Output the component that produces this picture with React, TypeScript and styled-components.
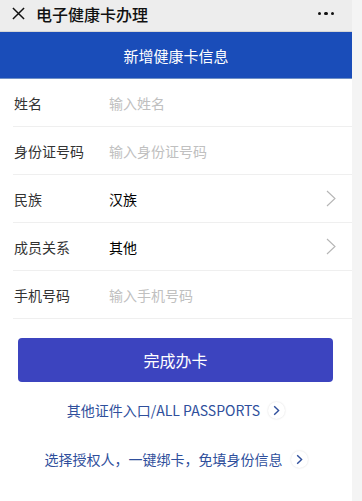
import React from 'react';
import styled, { createGlobalStyle } from 'styled-components';

const GlobalStyle = createGlobalStyle`
  html, body {
    margin: 0;
    padding: 0;
    background: #ffffff;
  }
  body {
    font-family: "Noto Sans CJK SC", "Noto Sans", sans-serif;
    -webkit-font-smoothing: antialiased;
  }
`;

interface Field {
  label: string;
  value?: string;
  placeholder?: string;
  select?: boolean;
}

const fields: Field[] = [
  { label: '姓名', placeholder: '输入姓名' },
  { label: '身份证号码', placeholder: '输入身份证号码' },
  { label: '民族', value: '汉族', select: true },
  { label: '成员关系', value: '其他', select: true },
  { label: '手机号码', placeholder: '输入手机号码' },
];

function Chevron() {
  return (
    <svg width="10" height="17" viewBox="0 0 10 17">
      <path d="M1 1l8 7.5L1 16" fill="none" stroke="#b5b5b5" strokeWidth="1.1" />
    </svg>
  );
}

function CircleArrow() {
  return (
    <Circle>
      <svg width="7" height="11" viewBox="0 0 7 11">
        <path d="M1.2 1.2L5.6 5.5 1.2 9.8" fill="none" stroke="#2f4f9c" strokeWidth="1.4" />
      </svg>
    </Circle>
  );
}

export default function App() {
  return (
    <>
      <GlobalStyle />
      <Page>
        <Main>
          <NavBar>
            <CloseIcon viewBox="0 0 14 14">
              <path d="M1 1l12 12M13 1L1 13" stroke="#111" strokeWidth="1.6" fill="none" />
            </CloseIcon>
            <NavTitle>电子健康卡办理</NavTitle>
            <Dots>
              <span />
              <span />
              <span />
            </Dots>
          </NavBar>
          <Banner>新增健康卡信息</Banner>
          <Form>
            {fields.map((f) => (
              <Row key={f.label}>
                <Label>{f.label}</Label>
                <Value $placeholder={!f.value}>{f.value ?? f.placeholder}</Value>
                {f.select ? <Chevron /> : null}
              </Row>
            ))}
          </Form>
          <Submit>完成办卡</Submit>
          <LinkRow $top={18}>
            其他证件入口/ALL PASSPORTS
            <CircleArrow />
          </LinkRow>
          <LinkRow $top={29}>
            选择授权人，一键绑卡，免填身份信息
            <CircleArrow />
          </LinkRow>
        </Main>
        <SideStrip />
      </Page>
    </>
  );
}

const Page = styled.div`
  display: flex;
  min-height: 501px;
`;

const Main = styled.div`
  width: 352px;
  background: #ffffff;
  display: flex;
  flex-direction: column;
`;

const SideStrip = styled.div`
  flex: 1;
  background: #f4f4f4;
`;

const NavBar = styled.div`
  height: 32px;
  background: #ededed;
  border-bottom: 1px solid #d6d6d6;
  display: flex;
  align-items: center;
  padding: 0 18px 0 12px;
  box-sizing: border-box;
`;

const CloseIcon = styled.svg`
  width: 13px;
  height: 13px;
  margin-right: 11px;
  margin-top: -4px;
`;

const NavTitle = styled.div`
  flex: 1;
  font-size: 16px;
  font-weight: 500;
  color: #111111;
  margin-top: -4px;
`;

const Dots = styled.div`
  display: flex;
  gap: 3px;
  margin-top: -4px;

  span {
    width: 3.5px;
    height: 3.5px;
    border-radius: 50%;
    background: #111111;
  }
`;

const Banner = styled.div`
  height: 46px;
  background: #1a4db9;
  border-bottom: 1px solid #6f90c6;
  color: #ffffff;
  font-size: 15px;
  display: flex;
  align-items: center;
  justify-content: center;
`;

const Form = styled.div`
  display: flex;
  flex-direction: column;
`;

const Row = styled.div`
  height: 48px;
  margin-left: 13px;
  padding-right: 16px;
  border-bottom: 1px solid #efefef;
  box-sizing: border-box;
  display: flex;
  align-items: center;
`;

const Label = styled.div`
  width: 95px;
  padding-left: 1px;
  font-size: 14px;
  color: #333333;
`;

const Value = styled.div<{ $placeholder: boolean }>`
  flex: 1;
  font-size: 14px;
  color: ${(p) => (p.$placeholder ? '#c0c0c0' : '#000000')};
`;

const Submit = styled.button`
  margin: 19px 19px 0 18px;
  height: 44px;
  border: none;
  border-radius: 4px;
  background: #3c44bf;
  color: #ffffff;
  font-family: inherit;
  font-size: 16px;
  cursor: pointer;
`;

const LinkRow = styled.div<{ $top: number }>`
  margin-top: ${(p) => p.$top}px;
  display: flex;
  align-items: center;
  justify-content: center;
  gap: 8px;
  font-size: 14px;
  color: #2f4f9c;
`;

const Circle = styled.span`
  width: 17px;
  height: 17px;
  border-radius: 50%;
  box-shadow: 0 0 2px rgba(0, 0, 0, 0.15);
  display: inline-flex;
  align-items: center;
  justify-content: center;
`;
